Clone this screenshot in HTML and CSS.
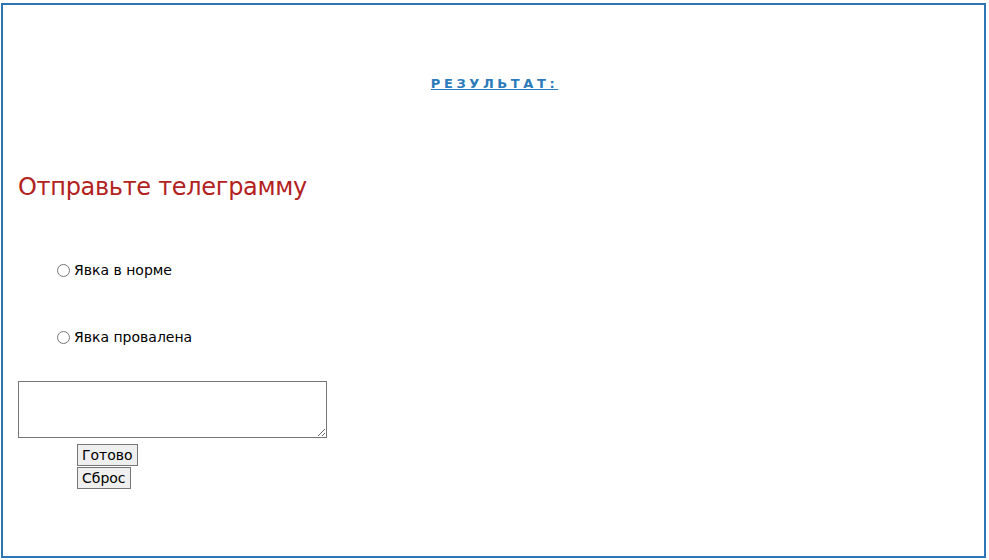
FILE: index.html
```html
<!DOCTYPE html>
<html lang="ru">
<head>
<meta charset="utf-8">
<title>Телеграмма</title>
<link rel="stylesheet" href="styles.css">
</head>
<body>
<div class="frame">
  <div class="result-row"><a class="result" href="#">РЕЗУЛЬТАТ:</a></div>
  <h1 class="heading">Отправьте телеграмму</h1>
  <form class="form">
    <label class="option"><input type="radio" name="status" class="radio"><span>Явка в норме</span></label>
    <label class="option"><input type="radio" name="status" class="radio"><span>Явка провалена</span></label>
    <textarea class="message"></textarea>
    <div class="buttons">
      <button type="submit" class="btn">Готово</button>
      <button type="reset" class="btn">Сброс</button>
    </div>
  </form>
</div>
</body>
</html>
```
FILE: styles.css
```css
html, body {
  margin: 0;
  padding: 0;
  background: #fff;
}
body {
  font-family: "DejaVu Sans", Verdana, sans-serif;
  color: #000;
}
.frame {
  margin: 3px 3px 2px 1px;
  border: 2px solid #2e75b6;
  height: 551px;
  padding: 0 15px;
  box-sizing: content-box;
  width: 951px;
}
.result-row {
  display: flex;
  justify-content: center;
  padding-top: 71px;
}
.result {
  font-size: 13px;
  font-weight: bold;
  letter-spacing: 3.6px;
  color: #2b7bbb;
  text-decoration: underline;
  line-height: 16px;
  margin-left: 2px;
}
.heading {
  font-family: "DejaVu Sans", Tahoma, sans-serif;
  font-weight: normal;
  font-size: 24px;
  color: #b2221e;
  margin: 79px 0 0 0;
  line-height: 32px;
  letter-spacing: -0.3px;
}
.form {
  display: flex;
  flex-direction: column;
  align-items: flex-start;
  margin-top: 58px;
}
.option {
  display: flex;
  align-items: center;
  font-size: 14px;
  line-height: 17px;
  margin-left: 38px;
  height: 18px;
  margin-bottom: 49px;
}
.option + .option {
  margin-bottom: 35px;
}
.radio {
  margin: 0 4px 0 1px;
  width: 13px;
  height: 13px;
}
.message {
  width: 309px;
  height: 57px;
  box-sizing: border-box;
  border: 1px solid #767676;
  margin: 0;
  resize: both;
}
.buttons {
  display: flex;
  flex-direction: column;
  align-items: flex-start;
  margin: 6px 0 0 59px;
}
.btn {
  font-family: "DejaVu Sans", Verdana, sans-serif;
  font-size: 14px;
  line-height: 17px;
  height: 22px;
  padding: 1px 4px;
  background: #efefef;
  border: 1px solid #767676;
  border-radius: 0;
  color: #000;
  margin: 0;
}
.btn + .btn {
  margin-top: 1px;
}
```
